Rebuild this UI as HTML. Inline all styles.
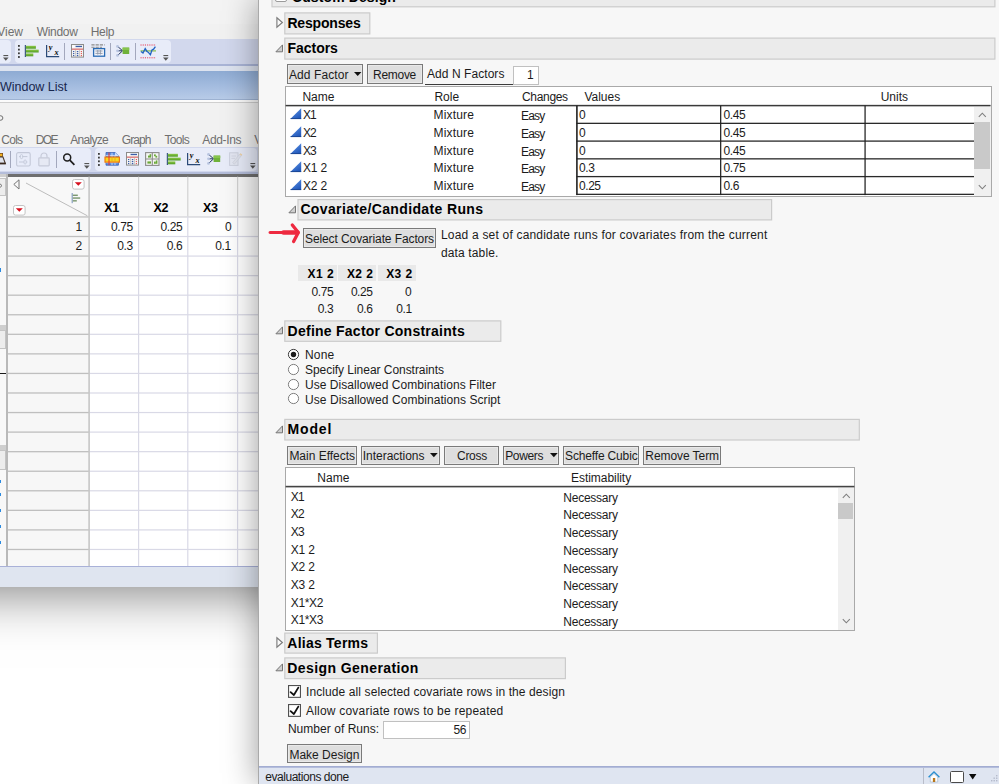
<!DOCTYPE html>
<html lang="en"><head><meta charset="utf-8"><title>Custom Design</title>
<style>
html,body{margin:0;padding:0;}
body{width:999px;height:784px;overflow:hidden;background:#fff;position:relative;font-family:"Liberation Sans",sans-serif;color:#1b1b1b;}
.abs,.t,.bx,.btn,.hd{position:absolute;box-sizing:border-box;}
.t{white-space:pre;}
#lw{position:absolute;left:-140px;top:-140px;width:539px;height:727px;background:#f1f1f1;box-shadow:0 6px 50px rgba(0,0,0,.5);}
#lwc{position:absolute;left:140px;top:140px;width:259px;height:587px;overflow:hidden;}
#rw{position:absolute;left:258px;top:0;width:741px;height:784px;background:#f7f7f7;box-shadow:0 0 32px rgba(0,0,0,.4);border-left:1px solid #a9a9a9;box-sizing:border-box;}
#rwc{position:absolute;left:-259px;top:0;width:999px;height:784px;overflow:hidden;}
.hd{background:#ebebeb;border:1px solid #cecece;}
.btn{background:#dedede;border:1px solid #7a7a7a;box-shadow:inset 0 0 0 1px #e9e9e9;}
.inp{position:absolute;box-sizing:border-box;background:#fff;border:1px solid #c0c0c0;}
.tb{position:absolute;box-sizing:border-box;background:#fff;border:1px solid #a9a9a9;}
.ln{position:absolute;background:#222;}
svg{position:absolute;overflow:visible;}
</style></head>
<body>
<div id="lw"><div id="lwc">
<div class="abs" style="left:0px;top:0px;width:259.00px;height:24.00px;background:#f3f3f3;"></div>
<div class="abs" style="left:0px;top:39.2px;width:259.00px;height:25.40px;background:#d2d8ed;"></div>
<div class="abs" style="left:-6px;top:39.8px;width:17.00px;height:23.40px;background:#e8ecf9;border-radius:4px;"></div>
<div class="abs" style="left:14.8px;top:39.8px;width:156.00px;height:23.40px;background:#e8ecf9;border-radius:4px;"></div>
<div class="abs" style="left:0px;top:64.4px;width:259.00px;height:1.60px;background:#a9b4d6;"></div>
<div class="abs" style="left:0px;top:66px;width:259.00px;height:4.80px;background:#dde3ef;"></div>
<div class="abs" style="left:0px;top:70.8px;width:259.00px;height:28.80px;background:linear-gradient(#8eabd3,#a5bde0 55%,#b9cce8);"></div>
<div class="abs" style="left:0px;top:99.4px;width:259.00px;height:0.80px;background:#9db2d2;"></div>
<div class="abs" style="left:0px;top:100.2px;width:259.00px;height:2.40px;background:#fbfbfb;"></div>
<div class="abs" style="left:0px;top:102.4px;width:259.00px;height:1.10px;background:#cfcfcf;"></div>
<svg style="left:3.4px;top:55.2px" width="6" height="7"><rect x="0.4" y="0" width="4.8" height="1.1" fill="#555"/><path d="M0 2.6 L5.6 2.6 L2.8 5.8 Z" fill="#555"/></svg>
<svg style="left:17.6px;top:44.6px" width="2" height="13"><rect x="0" y="0.0" width="1.8" height="1.8" fill="#3a3a3a"/><rect x="0" y="3.7" width="1.8" height="1.8" fill="#3a3a3a"/><rect x="0" y="7.4" width="1.8" height="1.8" fill="#3a3a3a"/><rect x="0" y="11.1" width="1.8" height="1.8" fill="#3a3a3a"/></svg>
<svg style="left:24.2px;top:44.8px" width="16" height="13"><defs><linearGradient id="gb" x1="0" y1="0" x2="0" y2="1"><stop offset="0" stop-color="#8fcb4a"/><stop offset="1" stop-color="#4f9a22"/></linearGradient></defs><rect x="0.8" y="0" width="1.1" height="12" fill="#2b4a78"/><rect x="1.9" y="0.8" width="10" height="2.9" fill="url(#gb)"/><rect x="1.9" y="4.6" width="12.8" height="2.9" fill="url(#gb)"/><rect x="1.9" y="8.4" width="7.4" height="2.9" fill="url(#gb)"/></svg>
<svg style="left:45.6px;top:44.8px" width="14" height="13"><path d="M0.6 0 L0.6 11.7 L13.2 11.7" fill="none" stroke="#2b4a78" stroke-width="1.2"/><text x="2.8" y="4.6" font-family="Liberation Serif,serif" font-weight="bold" font-style="italic" font-size="8.2" fill="#0a0a0a">y</text><text x="8.4" y="10" font-family="Liberation Serif,serif" font-weight="bold" font-style="italic" font-size="8.2" fill="#0a0a0a">x</text></svg>
<div class="abs" style="left:64.0px;top:43.2px;width:1.10px;height:16.80px;background:#a3a8bd;"></div>
<svg style="left:71px;top:44.2px" width="13" height="14"><rect x="0.5" y="0.5" width="12" height="12.6" fill="#f4f4f4" stroke="#8c8c8c" stroke-width="1"/><rect x="4.6" y="1.8" width="6.4" height="1.3" fill="#3b5ea8"/><rect x="1.2" y="1.4" width="2.4" height="2.2" fill="#fff"/><rect x="1" y="4.4" width="11" height="1.6" fill="#e08a8a"/><g fill="#3b5ea8"><rect x="2" y="7" width="1.3" height="1.1"/><rect x="2" y="9" width="1.3" height="1.1"/><rect x="2" y="11" width="1.3" height="1.1"/><rect x="5.8" y="7" width="1.5" height="1.2"/><rect x="5.8" y="9" width="1.5" height="1.2"/><rect x="5.8" y="11" width="1.5" height="1.2"/></g><g fill="#e05a5a"><rect x="9.8" y="7" width="1.2" height="1.1"/><rect x="9.8" y="9" width="1.2" height="1.1"/><rect x="9.8" y="11" width="1.2" height="1.1"/></g><path d="M4.5 6 L4.5 13 M8.5 6 L8.5 13" stroke="#b0b0b0" stroke-width="0.6"/></svg>
<svg style="left:90.6px;top:44.4px" width="15" height="13"><path d="M0.4 0.9 H13.6 M0.4 3.2 H11" stroke="#8a8a8a" stroke-width="1.1" stroke-dasharray="3.2 1"/><rect x="2.6" y="4.6" width="11" height="7.6" fill="#f2f4fa" stroke="#2a6bb5" stroke-width="1.3"/><path d="M4.4 7 H11.6 M4.4 9.4 H11.6 M6.8 6 V10.6 M9.4 6 V10.6" stroke="#9099aa" stroke-width="0.9"/></svg>
<div class="abs" style="left:110.0px;top:43.2px;width:1.10px;height:16.80px;background:#a3a8bd;"></div>
<svg style="left:116px;top:45px" width="14" height="12"><path d="M1.6 1.4 L6.4 5.6 M1.6 5.8 L6.4 5.8 M1.6 10.4 L6.4 6" stroke="#24365e" stroke-width="1"/><circle cx="1.5" cy="1.4" r="1.4" fill="#b8c4e0"/><circle cx="1.5" cy="5.8" r="1.4" fill="#b8c4e0"/><circle cx="1.5" cy="10.4" r="1.4" fill="#b8c4e0"/><rect x="6.6" y="2.6" width="6.6" height="6.4" fill="#6fb23a"/><rect x="6.6" y="2.6" width="6.6" height="2.4" fill="#86c44e"/></svg>
<div class="abs" style="left:134.9px;top:43.2px;width:1.10px;height:16.80px;background:#a3a8bd;"></div>
<svg style="left:140px;top:43.6px" width="17" height="15"><path d="M0.5 1 H16 M0.5 13.8 H16" stroke="#e8203c" stroke-width="0.9" stroke-dasharray="1.1 1.1"/><path d="M0.5 6.9 H16" stroke="#7cb83c" stroke-width="1.1"/><path d="M1 7.4 L3 9 L5.2 4.6 L6.8 7.2 L8.6 8.6 L10.4 10.8 L12 6 L13.6 5.2 L15.4 2.6" fill="none" stroke="#1f62c4" stroke-width="1.3"/></svg>
<svg style="left:162.8px;top:55.4px" width="6" height="7"><rect x="0.4" y="0" width="4.8" height="1.1" fill="#555"/><path d="M0 2.6 L5.6 2.6 L2.8 5.8 Z" fill="#555"/></svg>
<div class="abs" style="left:0px;top:103.5px;width:259.00px;height:43.70px;background:#f1f1f1;"></div>
<svg style="left:-3px;top:114.8px" width="8" height="6"><ellipse cx="3.2" cy="3" rx="2.7" ry="2.3" fill="none" stroke="#707070" stroke-width="1"/></svg>
<div class="abs" style="left:0px;top:147.2px;width:259.00px;height:26.40px;background:#d2d8ed;"></div>
<div class="abs" style="left:-6px;top:147.8px;width:97.00px;height:23.40px;background:#e8ecf9;border-radius:4px;"></div>
<div class="abs" style="left:94.6px;top:147.8px;width:162.40px;height:23.40px;background:#e8ecf9;border-radius:4px;"></div>
<div class="abs" style="left:0px;top:172px;width:259.00px;height:1.60px;background:#b4bdda;"></div>
<svg style="left:0px;top:153px" width="6" height="12"><rect x="-3" y="0.5" width="5.6" height="3" fill="#f2b01e" stroke="#7a4a10" stroke-width="0.8"/><path d="M-2 4 H3 L5.4 10.8 H-2 Z" fill="#dfe3ee" stroke="#4a3a30" stroke-width="1.1"/><rect x="-2" y="9.6" width="7.6" height="1.6" fill="#3a2a20"/></svg>
<div class="abs" style="left:9.9px;top:151.2px;width:1.10px;height:16.40px;background:#a3a8bd;"></div>
<svg style="left:16px;top:152px" width="15" height="15"><rect x="0.6" y="0.6" width="13.6" height="13.4" rx="1.6" fill="none" stroke="#c3c8d8" stroke-width="1.1"/><path d="M3 4.6 H11.4 M3 10 H11.4" stroke="#c3c8d8" stroke-width="1"/><rect x="4.4" y="2.6" width="2.2" height="4" rx="1" fill="#e8ecf9" stroke="#c3c8d8" stroke-width="0.9"/><rect x="8" y="8" width="2.2" height="4" rx="1" fill="#e8ecf9" stroke="#c3c8d8" stroke-width="0.9"/></svg>
<svg style="left:38px;top:152px" width="12" height="15"><path d="M3 6 V4 A3 3 0 0 1 9 4 V6" fill="none" stroke="#c6cad9" stroke-width="1.2"/><rect x="0.8" y="5.8" width="10.4" height="8" rx="0.8" fill="#e6e9f4" stroke="#c6cad9" stroke-width="1.2"/></svg>
<div class="abs" style="left:56.0px;top:151.2px;width:1.10px;height:16.40px;background:#a3a8bd;"></div>
<svg style="left:62px;top:152px" width="14" height="14"><circle cx="5.2" cy="5.4" r="3.5" fill="none" stroke="#1e1e1e" stroke-width="1.5"/><path d="M7.8 8.2 L12.4 12.8" stroke="#1e1e1e" stroke-width="1.7"/></svg>
<svg style="left:83.6px;top:163.4px" width="6" height="7"><rect x="0.4" y="0" width="4.8" height="1.1" fill="#555"/><path d="M0 2.6 L5.6 2.6 L2.8 5.8 Z" fill="#555"/></svg>
<svg style="left:97.9px;top:152.6px" width="2" height="13"><rect x="0" y="0.0" width="1.8" height="1.8" fill="#3a3a3a"/><rect x="0" y="3.7" width="1.8" height="1.8" fill="#3a3a3a"/><rect x="0" y="7.4" width="1.8" height="1.8" fill="#3a3a3a"/><rect x="0" y="11.1" width="1.8" height="1.8" fill="#3a3a3a"/></svg>
<svg style="left:104.6px;top:152px" width="15" height="14"><path d="M1 0.5 H10 L13.4 3.8 V13.2 H1 Z" fill="#5b8fe0" stroke="#3c62b4" stroke-width="0.8"/><path d="M10 0.5 L10 3.8 L13.4 3.8 Z" fill="#cfe0fa"/><path d="M1 3.4 H13 M1 10.6 H13 M7 0.8 V13 M10 3.8 V13" stroke="#dfe9fb" stroke-width="0.8"/><rect x="0" y="5.1" width="14.4" height="5" fill="#f6d81e" stroke="#f07a10" stroke-width="1.2"/><path d="M4 0.6 V13.2" stroke="#ee3030" stroke-width="1"/><path d="M7 5 V10 M10 5 V10" stroke="#f0a020" stroke-width="0.8"/></svg>
<svg style="left:126px;top:152.1px" width="13" height="14"><rect x="0.5" y="0.5" width="12" height="12.6" fill="#f4f4f4" stroke="#8c8c8c" stroke-width="1"/><rect x="4.6" y="1.8" width="6.4" height="1.3" fill="#3b5ea8"/><rect x="1.2" y="1.4" width="2.4" height="2.2" fill="#fff"/><rect x="1" y="4.4" width="11" height="1.6" fill="#e08a8a"/><g fill="#3b5ea8"><rect x="2" y="7" width="1.3" height="1.1"/><rect x="2" y="9" width="1.3" height="1.1"/><rect x="2" y="11" width="1.3" height="1.1"/><rect x="5.8" y="7" width="1.5" height="1.2"/><rect x="5.8" y="9" width="1.5" height="1.2"/><rect x="5.8" y="11" width="1.5" height="1.2"/></g><g fill="#e05a5a"><rect x="9.8" y="7" width="1.2" height="1.1"/><rect x="9.8" y="9" width="1.2" height="1.1"/><rect x="9.8" y="11" width="1.2" height="1.1"/></g><path d="M4.5 6 L4.5 13 M8.5 6 L8.5 13" stroke="#b0b0b0" stroke-width="0.6"/></svg>
<svg style="left:145px;top:152px" width="15" height="14"><rect x="0.6" y="0.6" width="13.4" height="12.8" fill="#f4f6f2" stroke="#8c8c8c" stroke-width="1.1"/><path d="M7.3 0.6 V13.4 M0.6 7 H14" stroke="#8c8c8c" stroke-width="1.1"/><g fill="#6aa83a"><rect x="3" y="3.6" width="3" height="2"/><rect x="4.6" y="2.2" width="1.6" height="2"/><rect x="9" y="2.4" width="1.8" height="1.8"/><rect x="10.4" y="3.8" width="1.8" height="1.8"/><rect x="2.4" y="9.4" width="3.6" height="2.2"/><rect x="9" y="9.6" width="1.8" height="2.2"/><rect x="10.8" y="8.4" width="1.6" height="3.4"/></g></svg>
<svg style="left:166.3px;top:152.6px" width="16" height="13"><defs><linearGradient id="gb" x1="0" y1="0" x2="0" y2="1"><stop offset="0" stop-color="#8fcb4a"/><stop offset="1" stop-color="#4f9a22"/></linearGradient></defs><rect x="0.8" y="0" width="1.1" height="12" fill="#2b4a78"/><rect x="1.9" y="0.8" width="10" height="2.9" fill="url(#gb)"/><rect x="1.9" y="4.6" width="12.8" height="2.9" fill="url(#gb)"/><rect x="1.9" y="8.4" width="7.4" height="2.9" fill="url(#gb)"/></svg>
<svg style="left:187.2px;top:152.6px" width="14" height="13"><path d="M0.6 0 L0.6 11.7 L13.2 11.7" fill="none" stroke="#2b4a78" stroke-width="1.2"/><text x="2.8" y="4.6" font-family="Liberation Serif,serif" font-weight="bold" font-style="italic" font-size="8.2" fill="#0a0a0a">y</text><text x="8.4" y="10" font-family="Liberation Serif,serif" font-weight="bold" font-style="italic" font-size="8.2" fill="#0a0a0a">x</text></svg>
<svg style="left:207.4px;top:153px" width="14" height="12"><path d="M1.6 1.4 L6.4 5.6 M1.6 5.8 L6.4 5.8 M1.6 10.4 L6.4 6" stroke="#24365e" stroke-width="1"/><circle cx="1.5" cy="1.4" r="1.4" fill="#b8c4e0"/><circle cx="1.5" cy="5.8" r="1.4" fill="#b8c4e0"/><circle cx="1.5" cy="10.4" r="1.4" fill="#b8c4e0"/><rect x="6.6" y="2.6" width="6.6" height="6.4" fill="#6fb23a"/><rect x="6.6" y="2.6" width="6.6" height="2.4" fill="#86c44e"/></svg>
<svg style="left:229px;top:152px" width="14" height="15"><rect x="0.6" y="0.8" width="8.4" height="12.6" fill="#e4e7f2" stroke="#cdd1de" stroke-width="1"/><path d="M2.4 4 H7 M2.4 6.4 H6" stroke="#cfd3e0" stroke-width="0.9"/><path d="M3.6 10.8 L11 1.8 L12.8 3.2 L5.4 12.2 Z" fill="#dfe2ec" stroke="#cfd3e0" stroke-width="0.7"/><path d="M11 1.8 L12.8 3.2" stroke="#f0d4a8" stroke-width="1.6"/></svg>
<svg style="left:249.6px;top:163.4px" width="6" height="7"><rect x="0.4" y="0" width="4.8" height="1.1" fill="#555"/><path d="M0 2.6 L5.6 2.6 L2.8 5.8 Z" fill="#555"/></svg>
<div class="abs" style="left:0px;top:173.6px;width:259.00px;height:392.60px;background:#fff;"></div>
<div class="abs" style="left:7.6px;top:173.6px;width:251.40px;height:3.10px;background:#6f6f6f;"></div>
<div class="abs" style="left:0px;top:173.6px;width:5.60px;height:392.60px;background:#f8f8f8;"></div>
<div class="abs" style="left:0px;top:173.6px;width:5.60px;height:3.40px;background:#cfcfcf;"></div>
<div class="abs" style="left:0px;top:177.6px;width:5.60px;height:18.00px;background:#ededed;border:1px solid #c4c4c4;border-left:none;box-sizing:border-box;"></div>
<svg style="left:-2px;top:182px" width="6" height="8"><path d="M1 1 L4 3.6 L1 6.4" fill="none" stroke="#777" stroke-width="1"/></svg>
<div class="abs" style="left:0px;top:324.6px;width:5.60px;height:5.40px;background:#cfcfcf;"></div>
<div class="abs" style="left:0px;top:330.4px;width:5.60px;height:19.00px;background:#ededed;border:1px solid #c4c4c4;border-left:none;box-sizing:border-box;"></div>
<div class="abs" style="left:0px;top:373px;width:5.60px;height:1.00px;background:#1a1a1a;"></div>
<div class="abs" style="left:0px;top:445px;width:5.60px;height:5.20px;background:#cfcfcf;"></div>
<div class="abs" style="left:0px;top:450.4px;width:5.60px;height:19.60px;background:#ededed;border:1px solid #c4c4c4;border-left:none;box-sizing:border-box;"></div>
<div class="abs" style="left:0px;top:267.5px;width:1.20px;height:4.00px;background:#2a8ae0;"></div>
<div class="abs" style="left:0px;top:480px;width:1.00px;height:3.20px;background:#2a8ae0;"></div>
<div class="abs" style="left:0px;top:493px;width:1.00px;height:3.20px;background:#2a8ae0;"></div>
<div class="abs" style="left:0px;top:509px;width:1.00px;height:3.20px;background:#2a8ae0;"></div>
<div class="abs" style="left:0px;top:525px;width:1.00px;height:3.20px;background:#2a8ae0;"></div>
<div class="abs" style="left:0px;top:541px;width:1.00px;height:3.20px;background:#2a8ae0;"></div>
<div class="abs" style="left:5.6px;top:173.6px;width:2.20px;height:392.60px;background:#b9b9b9;"></div>
<div class="abs" style="left:7.8px;top:176.7px;width:251.20px;height:39.50px;background:#f8f8f8;"></div>
<div class="abs" style="left:7.8px;top:216.2px;width:81.20px;height:350.00px;background:#f7f7f7;"></div>
<svg style="left:0;top:0" width="259" height="587"><rect x="7.80" y="216.30" width="81.20" height="1.30" fill="#bfbfbf"/><rect x="89.00" y="216.35" width="170.00" height="1.20" fill="#cfcfd4"/><rect x="7.80" y="235.86" width="81.20" height="1.30" fill="#bfbfbf"/><rect x="89.00" y="235.91" width="170.00" height="1.20" fill="#d9d9e6"/><rect x="7.80" y="255.42" width="81.20" height="1.30" fill="#bfbfbf"/><rect x="89.00" y="255.47" width="170.00" height="1.20" fill="#d9d9e6"/><rect x="7.80" y="274.98" width="81.20" height="1.30" fill="#bfbfbf"/><rect x="89.00" y="275.03" width="170.00" height="1.20" fill="#d9d9e6"/><rect x="7.80" y="294.54" width="81.20" height="1.30" fill="#bfbfbf"/><rect x="89.00" y="294.59" width="170.00" height="1.20" fill="#d9d9e6"/><rect x="7.80" y="314.10" width="81.20" height="1.30" fill="#bfbfbf"/><rect x="89.00" y="314.15" width="170.00" height="1.20" fill="#d9d9e6"/><rect x="7.80" y="333.66" width="81.20" height="1.30" fill="#bfbfbf"/><rect x="89.00" y="333.71" width="170.00" height="1.20" fill="#d9d9e6"/><rect x="7.80" y="353.22" width="81.20" height="1.30" fill="#bfbfbf"/><rect x="89.00" y="353.27" width="170.00" height="1.20" fill="#d9d9e6"/><rect x="7.80" y="372.78" width="81.20" height="1.30" fill="#bfbfbf"/><rect x="89.00" y="372.83" width="170.00" height="1.20" fill="#d9d9e6"/><rect x="7.80" y="392.34" width="81.20" height="1.30" fill="#bfbfbf"/><rect x="89.00" y="392.39" width="170.00" height="1.20" fill="#d9d9e6"/><rect x="7.80" y="411.90" width="81.20" height="1.30" fill="#bfbfbf"/><rect x="89.00" y="411.95" width="170.00" height="1.20" fill="#d9d9e6"/><rect x="7.80" y="431.46" width="81.20" height="1.30" fill="#bfbfbf"/><rect x="89.00" y="431.51" width="170.00" height="1.20" fill="#d9d9e6"/><rect x="7.80" y="451.02" width="81.20" height="1.30" fill="#bfbfbf"/><rect x="89.00" y="451.07" width="170.00" height="1.20" fill="#d9d9e6"/><rect x="7.80" y="470.58" width="81.20" height="1.30" fill="#bfbfbf"/><rect x="89.00" y="470.63" width="170.00" height="1.20" fill="#d9d9e6"/><rect x="7.80" y="490.14" width="81.20" height="1.30" fill="#bfbfbf"/><rect x="89.00" y="490.19" width="170.00" height="1.20" fill="#d9d9e6"/><rect x="7.80" y="509.70" width="81.20" height="1.30" fill="#bfbfbf"/><rect x="89.00" y="509.75" width="170.00" height="1.20" fill="#d9d9e6"/><rect x="7.80" y="529.26" width="81.20" height="1.30" fill="#bfbfbf"/><rect x="89.00" y="529.31" width="170.00" height="1.20" fill="#d9d9e6"/><rect x="7.80" y="548.82" width="81.20" height="1.30" fill="#bfbfbf"/><rect x="89.00" y="548.87" width="170.00" height="1.20" fill="#d9d9e6"/><rect x="88.30" y="176.70" width="1.60" height="389.50" fill="#c6c6c6"/><rect x="138.00" y="176.70" width="1.20" height="39.80" fill="#d2d2d2"/><rect x="138.00" y="216.50" width="1.20" height="349.70" fill="#d9d9e6"/><rect x="187.20" y="176.70" width="1.20" height="39.80" fill="#d2d2d2"/><rect x="187.20" y="216.50" width="1.20" height="349.70" fill="#d9d9e6"/><rect x="237.00" y="176.70" width="1.20" height="39.80" fill="#d2d2d2"/><rect x="237.00" y="216.50" width="1.20" height="349.70" fill="#d9d9e6"/></svg>
<svg style="left:13px;top:179px" width="8" height="11"><path d="M6 0.8 L6 10 L0.8 5.4 Z" fill="none" stroke="#777" stroke-width="1"/></svg>
<svg style="left:26px;top:183px" width="62" height="33"><path d="M0 0 L61.4 32.8" stroke="#bdbdbd" stroke-width="1"/></svg>
<svg style="left:72.3px;top:179.2px" width="13" height="11"><rect x="0.5" y="0.5" width="11.6" height="9.6" rx="2" fill="#fff" stroke="#c4c4c4" stroke-width="1"/><path d="M2.8 3.2 L9.8 3.2 L6.3 6.8 Z" fill="#d6101e"/></svg>
<svg style="left:13px;top:205.2px" width="13" height="11"><rect x="0.5" y="0.5" width="11.6" height="9.6" rx="2" fill="#fff" stroke="#c4c4c4" stroke-width="1"/><path d="M2.8 3.2 L9.8 3.2 L6.3 6.8 Z" fill="#d6101e"/></svg>
<svg style="left:71.4px;top:193px" width="10" height="11"><rect x="0.6" y="0" width="1.2" height="10.2" fill="#8aa0c4"/><rect x="1.8" y="1.6" width="5" height="1.3" fill="#6e8e62"/><rect x="1.8" y="4.4" width="7.4" height="1.3" fill="#6e8e62"/><rect x="1.8" y="7.2" width="4" height="1.3" fill="#6e8e62"/></svg>
<div class="abs" style="left:0px;top:566.2px;width:259.00px;height:20.80px;background:#dfe5f0;"></div>
<div class="abs" style="left:0px;top:565.8px;width:259.00px;height:1.20px;background:#a9b1d8;"></div>
<span class="t" style="top:25.00px;font-size:12px;line-height:14px;left:-2.80px;color:#6f6f6f;">View</span>
<span class="t" style="top:25.00px;font-size:12px;line-height:14px;left:36.70px;letter-spacing:-0.315px;color:#6f6f6f;">Window</span>
<span class="t" style="top:25.00px;font-size:12px;line-height:14px;left:90.70px;letter-spacing:-0.297px;color:#6f6f6f;">Help</span>
<span class="t" style="top:80.00px;font-size:12.5px;line-height:15px;left:-0.09px;color:#17264d;">Window List</span>
<span class="t" style="top:133.00px;font-size:12px;line-height:14px;left:1.30px;letter-spacing:-0.729px;color:#6f6f6f;">Cols</span>
<span class="t" style="top:133.00px;font-size:12px;line-height:14px;left:35.80px;letter-spacing:-1.639px;color:#6f6f6f;">DOE</span>
<span class="t" style="top:133.00px;font-size:12px;line-height:14px;left:70.30px;letter-spacing:-0.715px;color:#6f6f6f;">Analyze</span>
<span class="t" style="top:133.00px;font-size:12px;line-height:14px;left:121.80px;letter-spacing:-0.952px;color:#6f6f6f;">Graph</span>
<span class="t" style="top:133.00px;font-size:12px;line-height:14px;left:164.50px;letter-spacing:-0.703px;color:#6f6f6f;">Tools</span>
<span class="t" style="top:133.00px;font-size:12px;line-height:14px;left:202.30px;letter-spacing:-0.366px;color:#6f6f6f;">Add-Ins</span>
<span class="t" style="top:133.00px;font-size:12px;line-height:14px;left:254.20px;color:#6f6f6f;">View</span>
<span class="t" style="top:201.00px;font-size:12.5px;line-height:15px;left:104.20px;letter-spacing:-0.348px;font-weight:bold;color:#000;">X1</span>
<span class="t" style="top:201.00px;font-size:12.5px;line-height:15px;left:153.60px;letter-spacing:-0.348px;font-weight:bold;color:#000;">X2</span>
<span class="t" style="top:201.00px;font-size:12.5px;line-height:15px;left:202.90px;letter-spacing:-0.348px;font-weight:bold;color:#000;">X3</span>
<span class="t" style="top:220.00px;font-size:12px;line-height:14px;left:75.51px;">1</span>
<span class="t" style="top:220.00px;font-size:12px;line-height:14px;left:111.09px;letter-spacing:-0.438px;">0.75</span>
<span class="t" style="top:220.00px;font-size:12px;line-height:14px;left:160.59px;letter-spacing:-0.438px;">0.25</span>
<span class="t" style="top:220.00px;font-size:12px;line-height:14px;left:225.01px;">0</span>
<span class="t" style="top:239.00px;font-size:12px;line-height:14px;left:75.51px;">2</span>
<span class="t" style="top:239.00px;font-size:12px;line-height:14px;left:117.26px;letter-spacing:-0.417px;">0.3</span>
<span class="t" style="top:239.00px;font-size:12px;line-height:14px;left:166.76px;letter-spacing:-0.417px;">0.6</span>
<span class="t" style="top:239.00px;font-size:12px;line-height:14px;left:215.26px;letter-spacing:-0.417px;">0.1</span>
</div></div>
<div id="rw"><div id="rwc">
<svg style="left:0;top:0" width="999" height="784"><rect x="272.00" y="-15.40" width="722.90" height="22.20" fill="#ebebeb" stroke="#cbcbcb" stroke-width="1.2"/></svg>
<div class="abs" style="left:275px;top:-10px;width:12.0px;height:11.6px;border:1px solid #9a9a9a;background:#fff;border-radius:2px;"></div>
<svg style="left:276.3px;top:17px" width="8" height="12"><path d="M0.9 0.7 L6.4 5.5 L0.9 10.3 Z" fill="#f9f9f9" stroke="#7c7c7c" stroke-width="1.15"/></svg>
<svg style="left:0;top:0" width="999" height="784"><rect x="284.80" y="12.90" width="85.00" height="21.00" fill="#ebebeb" stroke="#cbcbcb" stroke-width="1.2"/></svg>
<svg style="left:275px;top:43.9px" width="9" height="9"><path d="M7.5 0.9 L7.5 7.8 L0.9 7.8 Z" fill="#cfcfcf" stroke="#757575" stroke-width="1"/></svg>
<svg style="left:0;top:0" width="999" height="784"><rect x="284.80" y="38.10" width="710.10" height="21.00" fill="#ebebeb" stroke="#cbcbcb" stroke-width="1.2"/></svg>
<div class="btn" style="left:287px;top:64.4px;width:76.0px;height:19.2px"></div>
<svg style="left:353.8px;top:72px" width="7.4" height="4.1"><path d="M0 0 L7.4 0 L3.7 4.1 Z" fill="#111"/></svg>
<div class="btn" style="left:367px;top:64.4px;width:55.6px;height:19.2px"></div>
<div class="abs" style="left:425px;top:83.6px;width:87.60px;height:1.00px;background:#3c3c3c"></div>
<div class="inp" style="left:512.6px;top:66px;width:26.0px;height:18.6px;"></div>
<div class="tb" style="left:284.7px;top:86px;width:706.9px;height:110.6px;"></div>
<svg style="left:0;top:0" width="999" height="784"><rect x="285.60" y="104.85" width="705.00" height="1.50" fill="#3a3a3a"/></svg>
<svg style="left:0;top:0" width="999" height="784"><rect x="576.50" y="122.70" width="397.70" height="1.30" fill="#2a2a2a"/><rect x="576.50" y="140.45" width="397.70" height="1.30" fill="#2a2a2a"/><rect x="576.50" y="158.20" width="397.70" height="1.30" fill="#2a2a2a"/><rect x="576.50" y="175.95" width="397.70" height="1.30" fill="#2a2a2a"/><rect x="576.50" y="193.70" width="397.70" height="1.30" fill="#2a2a2a"/><rect x="576.10" y="105.60" width="1.60" height="89.50" fill="#222"/><rect x="720.05" y="105.60" width="1.25" height="89.50" fill="#222"/><rect x="864.45" y="105.60" width="1.25" height="89.50" fill="#222"/></svg>
<div class="abs" style="left:974.2px;top:106.6px;width:16.40px;height:89.00px;background:#f0f0f0"></div>
<div class="abs" style="left:974.2px;top:122.3px;width:15.60px;height:47.10px;background:#c9c9c9"></div>
<svg style="left:978px;top:112px" width="9" height="6"><path d="M0.8 4.8 L4.3 1.2 L7.8 4.8" fill="none" stroke="#808080" stroke-width="1.1"/></svg>
<svg style="left:978px;top:184px" width="9" height="6"><path d="M0.8 1.2 L4.3 4.8 L7.8 1.2" fill="none" stroke="#808080" stroke-width="1.1"/></svg>
<svg width="0" height="0" style="left:0;top:0"><defs><linearGradient id="gt" x1="0.2" y1="0" x2="0.8" y2="1"><stop offset="0" stop-color="#5f95e6"/><stop offset="1" stop-color="#1d54b8"/></linearGradient></defs></svg>
<svg style="left:289.6px;top:108.00px" width="12" height="12"><path d="M11.2 0.2 L11.2 11 L0.3 11 Z" fill="url(#gt)"/><path d="M0.6 10.6 H11.2" stroke="#1a448f" stroke-width="0.9"/></svg>
<svg style="left:289.6px;top:125.72px" width="12" height="12"><path d="M11.2 0.2 L11.2 11 L0.3 11 Z" fill="url(#gt)"/><path d="M0.6 10.6 H11.2" stroke="#1a448f" stroke-width="0.9"/></svg>
<svg style="left:289.6px;top:143.44px" width="12" height="12"><path d="M11.2 0.2 L11.2 11 L0.3 11 Z" fill="url(#gt)"/><path d="M0.6 10.6 H11.2" stroke="#1a448f" stroke-width="0.9"/></svg>
<svg style="left:289.6px;top:161.16px" width="12" height="12"><path d="M11.2 0.2 L11.2 11 L0.3 11 Z" fill="url(#gt)"/><path d="M0.6 10.6 H11.2" stroke="#1a448f" stroke-width="0.9"/></svg>
<svg style="left:289.6px;top:178.88px" width="12" height="12"><path d="M11.2 0.2 L11.2 11 L0.3 11 Z" fill="url(#gt)"/><path d="M0.6 10.6 H11.2" stroke="#1a448f" stroke-width="0.9"/></svg>
<svg style="left:288.4px;top:205.2px" width="9" height="9"><path d="M7.5 0.9 L7.5 7.8 L0.9 7.8 Z" fill="#cfcfcf" stroke="#757575" stroke-width="1"/></svg>
<svg style="left:0;top:0" width="999" height="784"><rect x="298.00" y="199.60" width="473.60" height="20.30" fill="#ebebeb" stroke="#cbcbcb" stroke-width="1.2"/></svg>
<div class="btn" style="left:303px;top:228.4px;width:133.0px;height:19.3px"></div>
<svg style="left:0;top:0" width="310" height="250"><g fill="none" stroke="#ee2a40" stroke-linecap="round" stroke-linejoin="round"><path d="M270 232.6 L297 232.5" stroke-width="3"/><path d="M283.5 232.5 L297.5 232.5" stroke-width="4.4"/><path d="M292.3 225 L298.3 232.5 L293.6 241.6" stroke-width="3.3"/></g></svg>
<div class="abs" style="left:298px;top:265px;width:39.00px;height:16.00px;background:#e9e9e9"></div>
<div class="abs" style="left:338.3px;top:265px;width:37.90px;height:16.00px;background:#e9e9e9"></div>
<div class="abs" style="left:377.5px;top:265px;width:38.10px;height:16.00px;background:#e9e9e9"></div>
<svg style="left:275px;top:326.2px" width="9" height="9"><path d="M7.5 0.9 L7.5 7.8 L0.9 7.8 Z" fill="#cfcfcf" stroke="#757575" stroke-width="1"/></svg>
<svg style="left:0;top:0" width="999" height="784"><rect x="284.80" y="320.90" width="216.00" height="20.40" fill="#ebebeb" stroke="#cbcbcb" stroke-width="1.2"/></svg>
<svg style="left:286.8px;top:347.9px" width="13" height="13"><circle cx="6.5" cy="6.5" r="5.1" fill="#fff" stroke="#3a3a3a" stroke-width="1"/><circle cx="6.5" cy="6.5" r="2.7" fill="#1c1c1c"/></svg>
<svg style="left:286.8px;top:362.8px" width="13" height="13"><circle cx="6.5" cy="6.5" r="5.1" fill="#fff" stroke="#7e7e7e" stroke-width="1"/></svg>
<svg style="left:286.8px;top:377.6px" width="13" height="13"><circle cx="6.5" cy="6.5" r="5.1" fill="#fff" stroke="#7e7e7e" stroke-width="1"/></svg>
<svg style="left:286.8px;top:392.4px" width="13" height="13"><circle cx="6.5" cy="6.5" r="5.1" fill="#fff" stroke="#7e7e7e" stroke-width="1"/></svg>
<svg style="left:275px;top:424.8px" width="9" height="9"><path d="M7.5 0.9 L7.5 7.8 L0.9 7.8 Z" fill="#cfcfcf" stroke="#757575" stroke-width="1"/></svg>
<svg style="left:0;top:0" width="999" height="784"><rect x="284.80" y="419.40" width="574.50" height="20.60" fill="#ebebeb" stroke="#cbcbcb" stroke-width="1.2"/></svg>
<div class="btn" style="left:287.2px;top:445.8px;width:69.6px;height:19.0px"></div>
<div class="btn" style="left:361px;top:445.8px;width:78.6px;height:19.0px"></div>
<svg style="left:430.1px;top:452.9px" width="7.7" height="4.2"><path d="M0 0 L7.7 0 L3.85 4.2 Z" fill="#111"/></svg>
<div class="btn" style="left:444px;top:445.8px;width:55.3px;height:19.0px"></div>
<div class="btn" style="left:503.4px;top:445.8px;width:55.2px;height:19.0px"></div>
<svg style="left:549.9px;top:452.9px" width="7.7" height="4.2"><path d="M0 0 L7.7 0 L3.85 4.2 Z" fill="#111"/></svg>
<div class="btn" style="left:562.8px;top:445.8px;width:76.0px;height:19.0px"></div>
<div class="btn" style="left:643.2px;top:445.8px;width:77.6px;height:19.0px"></div>
<div class="tb" style="left:284.7px;top:467.2px;width:570.7px;height:163.4px;"></div>
<svg style="left:0;top:0" width="999" height="784"><rect x="285.60" y="485.80" width="568.80" height="1.60" fill="#444"/></svg>
<div class="abs" style="left:837.9px;top:487.6px;width:16.50px;height:142.00px;background:#f0f0f0"></div>
<div class="abs" style="left:837.9px;top:503.4px;width:15.60px;height:15.30px;background:#c9c9c9"></div>
<svg style="left:841.5px;top:492.6px" width="9" height="6"><path d="M0.8 4.8 L4.3 1.2 L7.8 4.8" fill="none" stroke="#808080" stroke-width="1.1"/></svg>
<svg style="left:841.5px;top:618.4px" width="9" height="6"><path d="M0.8 1.2 L4.3 4.8 L7.8 1.2" fill="none" stroke="#808080" stroke-width="1.1"/></svg>
<svg style="left:276.3px;top:637px" width="8" height="12"><path d="M0.9 0.7 L6.4 5.5 L0.9 10.3 Z" fill="#f9f9f9" stroke="#7c7c7c" stroke-width="1.15"/></svg>
<svg style="left:0;top:0" width="999" height="784"><rect x="284.80" y="633.10" width="92.60" height="20.00" fill="#ebebeb" stroke="#cbcbcb" stroke-width="1.2"/></svg>
<svg style="left:275px;top:663.3px" width="9" height="9"><path d="M7.5 0.9 L7.5 7.8 L0.9 7.8 Z" fill="#cfcfcf" stroke="#757575" stroke-width="1"/></svg>
<svg style="left:0;top:0" width="999" height="784"><rect x="284.80" y="657.90" width="280.60" height="20.70" fill="#ebebeb" stroke="#cbcbcb" stroke-width="1.2"/></svg>
<svg style="left:288px;top:685.1px" width="13" height="13"><rect x="0.55" y="0.55" width="11.9" height="11.8" fill="#fff" stroke="#505050" stroke-width="1.1"/><path d="M2.6 7.1 L5.9 10 L10.3 2.6" fill="none" stroke="#111" stroke-width="1.8" stroke-linecap="round" stroke-linejoin="round"/></svg>
<svg style="left:288px;top:703.9px" width="13" height="13"><rect x="0.55" y="0.55" width="11.9" height="11.8" fill="#fff" stroke="#505050" stroke-width="1.1"/><path d="M2.6 7.1 L5.9 10 L10.3 2.6" fill="none" stroke="#111" stroke-width="1.8" stroke-linecap="round" stroke-linejoin="round"/></svg>
<div class="inp" style="left:383.1px;top:721.3px;width:86.5px;height:18.0px;"></div>
<div class="btn" style="left:287px;top:744.2px;width:74.6px;height:19.2px"></div>
<div class="abs" style="left:259px;top:766.2px;width:740.00px;height:17.80px;background:#dfe5f1"></div>
<div class="abs" style="left:259px;top:766px;width:740.00px;height:2.00px;background:#b4bddc"></div>
<div class="abs" style="left:259px;top:766px;width:740.00px;height:1.00px;background:#a3add2"></div>
<div class="abs" style="left:922.5px;top:768px;width:1.10px;height:16.00px;background:#b9bdc9"></div>
<svg style="left:928px;top:771px" width="12" height="12"><path d="M0.6 6.2 L6 1 L11.4 6.2" fill="none" stroke="#2a8fd0" stroke-width="1.5"/><path d="M2.3 6 L6 2.6 L9.7 6 L9.7 11 L2.3 11 Z" fill="#fdfdfd" stroke="#9ab0c8" stroke-width="0.6"/><rect x="4.9" y="7" width="2.3" height="4" fill="#b8761a"/></svg>
<div class="abs" style="left:950.4px;top:771px;width:13.6px;height:11.7px;background:#fff;border:1px solid #4a4a4a;border-radius:1.5px"></div>
<svg style="left:969.3px;top:773.8px" width="7.4" height="5.4"><path d="M0 0 L7.4 0 L3.7 5.4 Z" fill="#0a0a0a"/></svg>
<svg style="left:989px;top:774px" width="10" height="10"><g fill="#b4bacb"><rect x="7" y="1" width="1.4" height="1.4"/><rect x="4.5" y="3.5" width="1.4" height="1.4"/><rect x="7" y="3.5" width="1.4" height="1.4"/><rect x="2" y="6" width="1.4" height="1.4"/><rect x="4.5" y="6" width="1.4" height="1.4"/><rect x="7" y="6" width="1.4" height="1.4"/></g></svg>
<span class="t" style="top:-11.00px;font-size:14px;line-height:17px;left:292.00px;letter-spacing:0.101px;font-weight:bold;color:#000;">Custom Design</span>
<span class="t" style="top:15.00px;font-size:14px;line-height:17px;left:287.40px;letter-spacing:-0.167px;font-weight:bold;color:#000;">Responses</span>
<span class="t" style="top:40.00px;font-size:14px;line-height:17px;left:287.40px;letter-spacing:-0.011px;font-weight:bold;color:#000;">Factors</span>
<span class="t" style="top:201.00px;font-size:14px;line-height:17px;left:300.40px;letter-spacing:0.364px;font-weight:bold;color:#000;">Covariate/Candidate Runs</span>
<span class="t" style="top:323.00px;font-size:14px;line-height:17px;left:287.60px;letter-spacing:0.250px;font-weight:bold;color:#000;">Define Factor Constraints</span>
<span class="t" style="top:421.00px;font-size:14px;line-height:17px;left:287.60px;letter-spacing:0.809px;font-weight:bold;color:#000;">Model</span>
<span class="t" style="top:635.00px;font-size:14px;line-height:17px;left:287.30px;letter-spacing:0.241px;font-weight:bold;color:#000;">Alias Terms</span>
<span class="t" style="top:660.00px;font-size:14px;line-height:17px;left:287.30px;letter-spacing:0.414px;font-weight:bold;color:#000;">Design Generation</span>
<span class="t" style="top:68.00px;font-size:12px;line-height:14px;left:289.00px;letter-spacing:0.080px;">Add Factor</span>
<span class="t" style="top:68.00px;font-size:12px;line-height:14px;left:373.00px;letter-spacing:-0.281px;">Remove</span>
<span class="t" style="top:67.00px;font-size:12px;line-height:14px;left:427.00px;letter-spacing:0.061px;">Add N Factors</span>
<span class="t" style="top:68.00px;font-size:12px;line-height:14px;left:527.11px;">1</span>
<span class="t" style="top:90.00px;font-size:12px;line-height:14px;left:302.40px;">Name</span>
<span class="t" style="top:90.00px;font-size:12px;line-height:14px;left:434.40px;">Role</span>
<span class="t" style="top:90.00px;font-size:12px;line-height:14px;left:522.00px;letter-spacing:-0.321px;">Changes</span>
<span class="t" style="top:90.00px;font-size:12px;line-height:14px;left:584.40px;">Values</span>
<span class="t" style="top:90.00px;font-size:12px;line-height:14px;left:880.70px;">Units</span>
<span class="t" style="top:108.00px;font-size:12px;line-height:14px;left:303.00px;letter-spacing:-0.894px;">X1</span>
<span class="t" style="top:108.00px;font-size:12px;line-height:14px;left:433.60px;letter-spacing:0.165px;">Mixture</span>
<span class="t" style="top:109.00px;font-size:12px;line-height:14px;left:521.00px;letter-spacing:-0.797px;">Easy</span>
<span class="t" style="top:126.00px;font-size:12px;line-height:14px;left:303.00px;letter-spacing:-0.894px;">X2</span>
<span class="t" style="top:126.00px;font-size:12px;line-height:14px;left:433.60px;letter-spacing:0.165px;">Mixture</span>
<span class="t" style="top:127.00px;font-size:12px;line-height:14px;left:521.00px;letter-spacing:-0.797px;">Easy</span>
<span class="t" style="top:144.00px;font-size:12px;line-height:14px;left:303.00px;letter-spacing:-0.894px;">X3</span>
<span class="t" style="top:144.00px;font-size:12px;line-height:14px;left:433.60px;letter-spacing:0.165px;">Mixture</span>
<span class="t" style="top:145.00px;font-size:12px;line-height:14px;left:521.00px;letter-spacing:-0.797px;">Easy</span>
<span class="t" style="top:161.00px;font-size:12px;line-height:14px;left:303.00px;letter-spacing:-0.197px;">X1 2</span>
<span class="t" style="top:161.00px;font-size:12px;line-height:14px;left:433.60px;letter-spacing:0.165px;">Mixture</span>
<span class="t" style="top:162.00px;font-size:12px;line-height:14px;left:521.00px;letter-spacing:-0.797px;">Easy</span>
<span class="t" style="top:179.00px;font-size:12px;line-height:14px;left:303.00px;letter-spacing:-0.197px;">X2 2</span>
<span class="t" style="top:179.00px;font-size:12px;line-height:14px;left:433.60px;letter-spacing:0.165px;">Mixture</span>
<span class="t" style="top:180.00px;font-size:12px;line-height:14px;left:521.00px;letter-spacing:-0.797px;">Easy</span>
<span class="t" style="top:108.00px;font-size:12px;line-height:14px;left:579.00px;">0</span>
<span class="t" style="top:108.00px;font-size:12px;line-height:14px;left:723.60px;letter-spacing:-0.438px;">0.45</span>
<span class="t" style="top:126.00px;font-size:12px;line-height:14px;left:579.00px;">0</span>
<span class="t" style="top:126.00px;font-size:12px;line-height:14px;left:723.60px;letter-spacing:-0.438px;">0.45</span>
<span class="t" style="top:144.00px;font-size:12px;line-height:14px;left:579.00px;">0</span>
<span class="t" style="top:144.00px;font-size:12px;line-height:14px;left:723.60px;letter-spacing:-0.438px;">0.45</span>
<span class="t" style="top:161.00px;font-size:12px;line-height:14px;left:579.00px;letter-spacing:-0.417px;">0.3</span>
<span class="t" style="top:161.00px;font-size:12px;line-height:14px;left:723.60px;letter-spacing:-0.438px;">0.75</span>
<span class="t" style="top:179.00px;font-size:12px;line-height:14px;left:579.00px;letter-spacing:-0.438px;">0.25</span>
<span class="t" style="top:179.00px;font-size:12px;line-height:14px;left:723.60px;letter-spacing:-0.417px;">0.6</span>
<span class="t" style="top:232.00px;font-size:12px;line-height:14px;left:305.00px;letter-spacing:-0.100px;">Select Covariate Factors</span>
<span class="t" style="top:228.00px;font-size:12px;line-height:14px;left:441.00px;letter-spacing:0.194px;">Load a set of candidate runs for covariates from the current</span>
<span class="t" style="top:246.00px;font-size:12px;line-height:14px;left:441.00px;letter-spacing:0.132px;">data table.</span>
<span class="t" style="top:267.00px;font-size:12px;line-height:14px;left:307.60px;letter-spacing:0.428px;font-weight:bold;color:#000;">X1 2</span>
<span class="t" style="top:285.00px;font-size:12px;line-height:14px;left:311.59px;letter-spacing:-0.438px;">0.75</span>
<span class="t" style="top:302.00px;font-size:12px;line-height:14px;left:317.76px;letter-spacing:-0.417px;">0.3</span>
<span class="t" style="top:267.00px;font-size:12px;line-height:14px;left:346.90px;letter-spacing:0.428px;font-weight:bold;color:#000;">X2 2</span>
<span class="t" style="top:285.00px;font-size:12px;line-height:14px;left:350.89px;letter-spacing:-0.438px;">0.25</span>
<span class="t" style="top:302.00px;font-size:12px;line-height:14px;left:357.06px;letter-spacing:-0.417px;">0.6</span>
<span class="t" style="top:267.00px;font-size:12px;line-height:14px;left:386.20px;letter-spacing:0.428px;font-weight:bold;color:#000;">X3 2</span>
<span class="t" style="top:285.00px;font-size:12px;line-height:14px;left:405.11px;">0</span>
<span class="t" style="top:302.00px;font-size:12px;line-height:14px;left:396.36px;letter-spacing:-0.417px;">0.1</span>
<span class="t" style="top:348.00px;font-size:12px;line-height:14px;left:305.00px;letter-spacing:0.203px;">None</span>
<span class="t" style="top:363.00px;font-size:12px;line-height:14px;left:305.00px;letter-spacing:-0.041px;">Specify Linear Constraints</span>
<span class="t" style="top:378.00px;font-size:12px;line-height:14px;left:305.00px;letter-spacing:0.047px;">Use Disallowed Combinations Filter</span>
<span class="t" style="top:393.00px;font-size:12px;line-height:14px;left:305.00px;letter-spacing:0.061px;">Use Disallowed Combinations Script</span>
<span class="t" style="top:449.00px;font-size:12px;line-height:14px;left:289.40px;letter-spacing:-0.018px;">Main Effects</span>
<span class="t" style="top:449.00px;font-size:12px;line-height:14px;left:362.80px;letter-spacing:-0.029px;">Interactions</span>
<span class="t" style="top:449.00px;font-size:12px;line-height:14px;left:457.00px;letter-spacing:-0.269px;">Cross</span>
<span class="t" style="top:449.00px;font-size:12px;line-height:14px;left:505.20px;letter-spacing:-0.336px;">Powers</span>
<span class="t" style="top:449.00px;font-size:12px;line-height:14px;left:565.10px;letter-spacing:-0.162px;">Scheffe Cubic</span>
<span class="t" style="top:449.00px;font-size:12px;line-height:14px;left:645.30px;letter-spacing:-0.070px;">Remove Term</span>
<span class="t" style="top:471.00px;font-size:12px;line-height:14px;left:317.30px;">Name</span>
<span class="t" style="top:471.00px;font-size:12px;line-height:14px;left:571.10px;letter-spacing:-0.057px;">Estimability</span>
<span class="t" style="top:490.00px;font-size:12px;line-height:14px;left:290.80px;letter-spacing:-0.894px;">X1</span>
<span class="t" style="top:491.00px;font-size:12px;line-height:14px;left:563.30px;letter-spacing:-0.243px;">Necessary</span>
<span class="t" style="top:507.00px;font-size:12px;line-height:14px;left:290.80px;letter-spacing:-0.894px;">X2</span>
<span class="t" style="top:508.00px;font-size:12px;line-height:14px;left:563.30px;letter-spacing:-0.243px;">Necessary</span>
<span class="t" style="top:525.00px;font-size:12px;line-height:14px;left:290.80px;letter-spacing:-0.894px;">X3</span>
<span class="t" style="top:526.00px;font-size:12px;line-height:14px;left:563.30px;letter-spacing:-0.243px;">Necessary</span>
<span class="t" style="top:543.00px;font-size:12px;line-height:14px;left:290.80px;letter-spacing:-0.197px;">X1 2</span>
<span class="t" style="top:544.00px;font-size:12px;line-height:14px;left:563.30px;letter-spacing:-0.243px;">Necessary</span>
<span class="t" style="top:560.00px;font-size:12px;line-height:14px;left:290.80px;letter-spacing:-0.197px;">X2 2</span>
<span class="t" style="top:562.00px;font-size:12px;line-height:14px;left:563.30px;letter-spacing:-0.243px;">Necessary</span>
<span class="t" style="top:578.00px;font-size:12px;line-height:14px;left:290.80px;letter-spacing:-0.197px;">X3 2</span>
<span class="t" style="top:579.00px;font-size:12px;line-height:14px;left:563.30px;letter-spacing:-0.243px;">Necessary</span>
<span class="t" style="top:596.00px;font-size:12px;line-height:14px;left:290.80px;letter-spacing:-0.366px;">X1*X2</span>
<span class="t" style="top:597.00px;font-size:12px;line-height:14px;left:563.30px;letter-spacing:-0.243px;">Necessary</span>
<span class="t" style="top:613.00px;font-size:12px;line-height:14px;left:290.80px;letter-spacing:-0.366px;">X1*X3</span>
<span class="t" style="top:615.00px;font-size:12px;line-height:14px;left:563.30px;letter-spacing:-0.243px;">Necessary</span>
<span class="t" style="top:685.00px;font-size:12px;line-height:14px;left:306.00px;letter-spacing:0.099px;">Include all selected covariate rows in the design</span>
<span class="t" style="top:704.00px;font-size:12px;line-height:14px;left:306.00px;letter-spacing:0.211px;">Allow covariate rows to be repeated</span>
<span class="t" style="top:722.00px;font-size:12px;line-height:14px;left:287.90px;letter-spacing:0.040px;">Number of Runs:</span>
<span class="t" style="top:723.00px;font-size:12px;line-height:14px;left:453.54px;letter-spacing:-0.501px;">56</span>
<span class="t" style="top:748.00px;font-size:12px;line-height:14px;left:289.40px;">Make Design</span>
<span class="t" style="top:770.00px;font-size:12px;line-height:14px;left:265.20px;letter-spacing:-0.447px;">evaluations done</span>
</div></div>
</body></html>
